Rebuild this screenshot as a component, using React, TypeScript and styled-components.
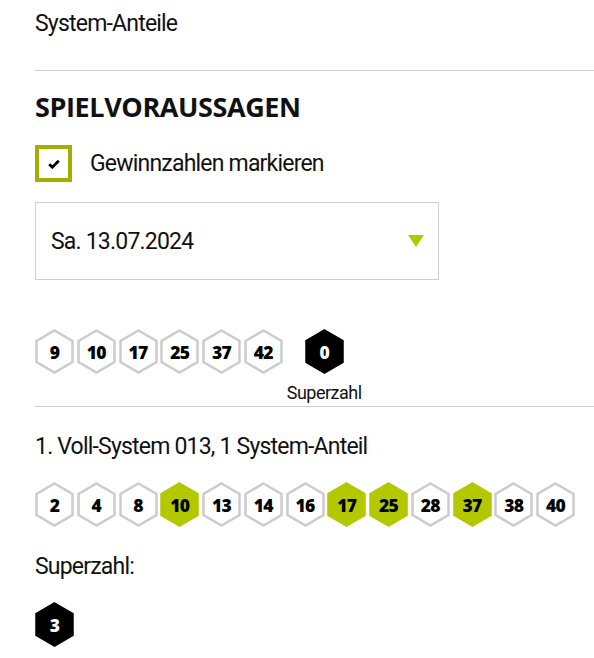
import styled, { createGlobalStyle } from "styled-components";

const GlobalStyle = createGlobalStyle`
    body {
        margin: 0;
        background: #fff;
        color: #111;
        font-family: Roboto, "Liberation Sans", sans-serif;
    }
`;

const Page = styled.div`
    padding: 12px 0 0 35px;
    width: 594px;
    box-sizing: border-box;
`;
const Text = styled.div<{ $top?: number }>`
    font-size: 23px;
    line-height: 24px;
    letter-spacing: -0.8px;
    margin-top: ${(p) => p.$top ?? 0}px;
`;
const Divider = styled.hr<{ $top: number }>`
    border: 0;
    border-top: 1px solid #cfcfcf;
    margin: ${(p) => p.$top}px 0 0;
`;
const Heading = styled.h2`
    font-family: "Open Sans", sans-serif;
    font-weight: 700;
    font-size: 27px;
    line-height: 30px;
    letter-spacing: -0.4px;
    margin: 21px 0 0;
`;
const CheckRow = styled.label`
    display: flex;
    align-items: center;
    gap: 18px;
    margin-top: 23px;
    font-size: 23px;
    letter-spacing: -0.8px;
`;
const Box = styled.span`
    width: 37px;
    height: 37px;
    box-sizing: border-box;
    border: 4px solid #a3ae00;
    display: flex;
    align-items: center;
    justify-content: center;
`;
const Select = styled.div`
    margin-top: 20px;
    width: 404px;
    height: 78px;
    box-sizing: border-box;
    border: 1px solid #cfcfcf;
    display: flex;
    align-items: center;
    justify-content: space-between;
    padding: 0 14px 0 15px;
    font-size: 23px;
    letter-spacing: -0.8px;
`;
const Arrow = styled.span`
    width: 0;
    height: 0;
    border-left: 8px solid transparent;
    border-right: 8px solid transparent;
    border-top: 12px solid #b4c800;
`;
const DrawRow = styled.div`
    display: flex;
    align-items: flex-start;
    gap: 4px;
    margin-top: 49px;
`;
const HexRow = styled.div<{ $top?: number }>`
    display: flex;
    gap: 2.75px;
    margin-top: ${(p) => p.$top ?? 0}px;
`;
const Super = styled.div`
    display: flex;
    flex-direction: column;
    align-items: center;
    gap: 9px;
    font-size: 18px;
    line-height: 20px;
    letter-spacing: -0.5px;
`;
const HexWrap = styled.div`
    position: relative;
    width: 39px;
    height: 45px;
    flex: none;
`;
const HexNum = styled.span<{ $light?: boolean }>`
    position: absolute;
    inset: 0;
    display: flex;
    align-items: center;
    justify-content: center;
    font-family: "Open Sans", sans-serif;
    font-weight: 800;
    font-size: 17.5px;
    letter-spacing: -0.8px;
    color: ${(p) => (p.$light ? "#fff" : "#000")};
`;

type Kind = "plain" | "hit" | "super";

function Hex({ n, kind = "plain" }: { n: number; kind?: Kind }) {
    const fill = kind === "hit" ? "#b4c800" : kind === "super" ? "#000" : "#fff";
    const stroke = kind === "plain" ? "#cccccc" : fill;
    return (
        <HexWrap>
            <svg width="39" height="45" viewBox="0 0 39 45">
                <polygon
                    points="19.5,1.5 37.5,11.9 37.5,33.1 19.5,43.5 1.5,33.1 1.5,11.9"
                    fill={fill}
                    stroke={stroke}
                    strokeWidth="2.5"
                />
            </svg>
            <HexNum $light={kind === "super"}>{n}</HexNum>
        </HexWrap>
    );
}

const drawn = [9, 10, 17, 25, 37, 42];
const system = [2, 4, 8, 10, 13, 14, 16, 17, 25, 28, 37, 38, 40];

export default function App() {
    return (
        <Page>
            <GlobalStyle />
            <Text>System-Anteile</Text>
            <Divider $top={34} />
            <Heading>SPIELVORAUSSAGEN</Heading>
            <CheckRow>
                <Box>
                    <svg width="12" height="10" viewBox="0 0 12 10">
                        <path d="M1.2 5.2 L4.3 8.2 L10.8 1.8" fill="none" stroke="#000" strokeWidth="2.8" />
                    </svg>
                </Box>
                Gewinnzahlen markieren
            </CheckRow>
            <Select>
                Sa. 13.07.2024
                <Arrow />
            </Select>
            <DrawRow>
                <HexRow>
                    {drawn.map((n) => (
                        <Hex key={n} n={n} />
                    ))}
                </HexRow>
                <Super>
                    <Hex n={0} kind="super" />
                    Superzahl
                </Super>
            </DrawRow>
            <Divider $top={3} />
            <Text $top={28}>1. Voll-System 013, 1 System-Anteil</Text>
            <HexRow $top={23}>
                {system.map((n) => (
                    <Hex key={n} n={n} kind={drawn.includes(n) ? "hit" : "plain"} />
                ))}
            </HexRow>
            <Text $top={28}>Superzahl:</Text>
            <HexRow $top={23}>
                <Hex n={3} kind="super" />
            </HexRow>
        </Page>
    );
}
